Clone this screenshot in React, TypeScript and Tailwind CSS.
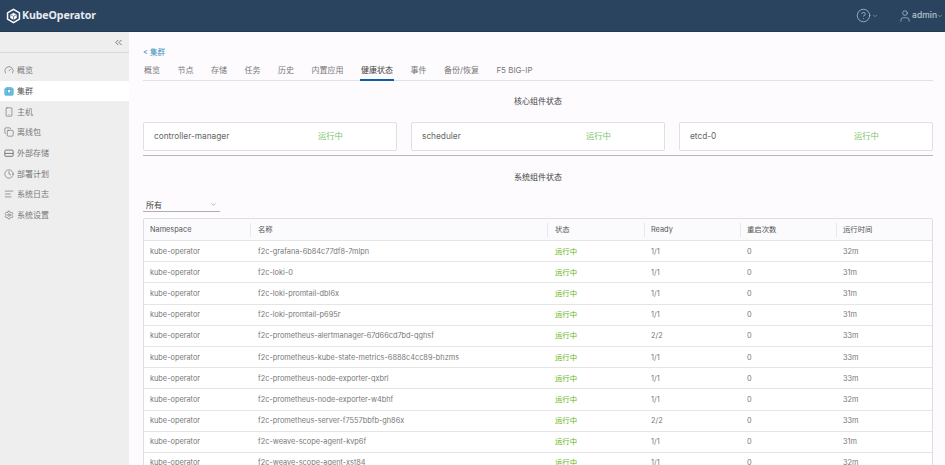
import React from "react";
import { ChevronDown, ChevronsLeft, CircleHelp, Clock, Copy, Gauge, Settings, Smartphone, AlignLeft, User } from "lucide-react";

function ClusterIcon({ className }: { className?: string }) {
  return (
    <svg viewBox="0 0 12 12" className={className}>
      <path d="M1 3.500 2.500 2h7L11 3.500V10a1 1 0 0 1-1 1H2a1 1 0 0 1-1-1z" fill="#6cc0e4" stroke="#49afd9" strokeWidth="1" />
      <rect x="4" y="4.200" width="4" height="4" fill="white" stroke="#2f8fbb" strokeWidth="0.7" />
    </svg>
  );
}
function StorageIcon({ className }: { className?: string }) {
  return (
    <svg viewBox="0 0 12 12" className={className} fill="none" stroke="currentColor" strokeWidth="1">
      <rect x="1" y="2.500" width="10" height="7.500" rx="1.300" />
      <path d="M1 6.500h10" />
    </svg>
  );
}

const nav = [
  { t: "概览", I: Gauge },
  { t: "集群", I: ClusterIcon, active: true },
  { t: "主机", I: Smartphone },
  { t: "离线包", I: Copy },
  { t: "外部存储", I: StorageIcon },
  { t: "部署计划", I: Clock },
  { t: "系统日志", I: AlignLeft },
  { t: "系统设置", I: Settings },
];
const tabs = ["概览", "节点", "存储", "任务", "历史", "内置应用", "健康状态", "事件", "备份/恢复", "F5 BIG-IP"];
const cards = ["controller-manager", "scheduler", "etcd-0"];
const rows = [
  ["f2c-grafana-6b84c77df8-7mlpn", "1/1", "32m"],
  ["f2c-loki-0", "1/1", "31m"],
  ["f2c-loki-promtail-dbl6x", "1/1", "31m"],
  ["f2c-loki-promtail-p695r", "1/1", "31m"],
  ["f2c-prometheus-alertmanager-67d66cd7bd-qghsf", "2/2", "33m"],
  ["f2c-prometheus-kube-state-metrics-6888c4cc89-bhzms", "1/1", "33m"],
  ["f2c-prometheus-node-exporter-qxbrl", "1/1", "33m"],
  ["f2c-prometheus-node-exporter-w4bhf", "1/1", "32m"],
  ["f2c-prometheus-server-f7557bbfb-gh86x", "2/2", "33m"],
  ["f2c-weave-scope-agent-kvp6f", "1/1", "31m"],
  ["f2c-weave-scope-agent-xst84", "1/1", "32m"],
];
const grid = "grid grid-cols-[106px_297px_97px_96px_96px_1fr]";
const font = "font-['Inter','Noto_Sans_CJK_SC',sans-serif]";

function Logo() {
  return (
    <svg viewBox="0 0 24 24" className="w-[15px] h-[16px] shrink-0" fill="none" stroke="white">
      <path d="M12 1.500 21.500 7v10L12 22.500 2.500 17V7z" strokeWidth="2.400" />
      <path d="M12 7l5 2.800v5.400L12 18l-5-2.800V9.800z" fill="white" strokeWidth="0.500" />
      <path d="M7 9.800l5 2.800 5-2.800M12 12.600V18" stroke="#2a4460" strokeWidth="1" />
    </svg>
  );
}

export default function App() {
  return (
    <div className={`h-[465px] w-[945px] overflow-hidden flex flex-col bg-[#fdfbfe] ${font}`}>
      <header className="h-[32px] shrink-0 bg-[#2a4460] border-b border-[#233a52] flex items-center pl-[6px] pr-[2px] text-white">
        <Logo />
        <span className="ml-[1px] text-[10.600px] tracking-[-0.1px] leading-none font-bold text-[#e6eaee] font-['Noto_Sans',sans-serif]">KubeOperator</span>
        <div className="ml-auto flex items-center text-[#b9c4cf]">
          <CircleHelp className="w-[15px] h-[15px]" strokeWidth={1.200} />
          <ChevronDown className="w-[6px] h-[6px] ml-[1px]" />
          <User className="w-[14px] h-[14px] ml-[20px]" strokeWidth={1.200} />
          <span className="text-[8.500px] leading-none font-medium">admin</span>
          <ChevronDown className="w-[6px] h-[6px]" />
        </div>
      </header>
      <div className="flex-1 flex min-h-0">
        <aside className="w-[129px] shrink-0 bg-[#eeeeee]">
          <div className="h-[21px] border-b border-[#d9d9d9] flex items-center justify-end pr-[5px] text-[#444]">
            <ChevronsLeft className="w-[11px] h-[11px]" strokeWidth={1.500} />
          </div>
          <nav className="mt-[7px]">
            {nav.map(({ t, I, active }) => (
              <div key={t} className={`h-[20.700px] pl-[4px] flex items-center gap-[3px] text-[8px] ${active ? "bg-white text-[#555]" : "text-[#777]"}`}>
                <I className="w-[10px] h-[10px] text-[#666]" strokeWidth={1.500} />
                <span>{t}</span>
              </div>
            ))}
          </nav>
        </aside>
        <main className="flex-1 min-w-0 pl-[14px] pr-[12px] pt-[16px]">
          <div className="text-[7.500px] leading-[10px] text-[#3b8fc0]">&lt; 集群</div>
          <div className="mt-[5px] h-[18px] border-b border-[#e2e2e2] flex gap-[15.500px] text-[8px] text-[#777]">
            {tabs.map((t) => (
              <div key={t} className={`px-[1px] -mb-px leading-[15px] h-[18px] whitespace-nowrap ${t === "健康状态" ? "border-b-2 border-[#0a5da8] text-[#444]" : ""}`}>{t}</div>
            ))}
          </div>
          <h3 className="mt-[15px] text-center text-[8px] leading-[11px] text-[#444]">核心组件状态</h3>
          <div className="mt-[15px] grid grid-cols-3 gap-[14px]">
            {cards.map((c) => (
              <div key={c} className="h-[29px] bg-white border border-[#e0e0e0] rounded-[2px] pl-[10px] flex items-center text-[8.300px] text-[#666]">
                <span className="w-[164px]">{c}</span>
                <span className="text-[#7cc36a]">运行中</span>
              </div>
            ))}
          </div>
          <div className="mt-[4px] border-t border-[#b8b8b8]" />
          <h3 className="mt-[16px] text-center text-[8px] leading-[11px] text-[#444]">系统组件状态</h3>
          <div className="mt-[15px] w-[77px] h-[14px] border-b border-[#b0b0b0] pl-[3px] pr-[3px] flex items-center justify-between text-[8px] text-[#444]">
            <span>所有</span>
            <ChevronDown className="w-[7px] h-[7px] text-[#888]" />
          </div>
          <div className="mt-[6px] border border-[#dedede] rounded-[2px] bg-white text-[7.350px] text-[#777]">
            <div className={`${grid} h-[22px] items-center bg-[#fbfafc] border-b border-[#e5e5e5] text-[#555]`}>
              {["Namespace", "名称", "状态", "Ready", "重启次数", "运行时间"].map((h, i) => (
                <div key={h} className={`h-[14px] leading-[14px] ${i === 0 ? "pl-[6px]" : i === 1 || i === 2 ? "pl-[7px] border-l border-[#e8e8e8]" : "pl-[6px] border-l border-[#e8e8e8]"}`}>{h}</div>
              ))}
            </div>
            {rows.map(([n, r, a]) => (
              <div key={n} className={`${grid} h-[21.200px] items-center border-b border-[#e5e5e5]`}>
                <div className="pl-[6px]">kube-operator</div>
                <div className="pl-[8px] whitespace-nowrap">{n}</div>
                <div className="pl-[8px] text-[#60b515]">运行中</div>
                <div className="pl-[7px]">{r}</div>
                <div className="pl-[7px]">0</div>
                <div className="pl-[7px]">{a}</div>
              </div>
            ))}
          </div>
        </main>
      </div>
    </div>
  );
}
